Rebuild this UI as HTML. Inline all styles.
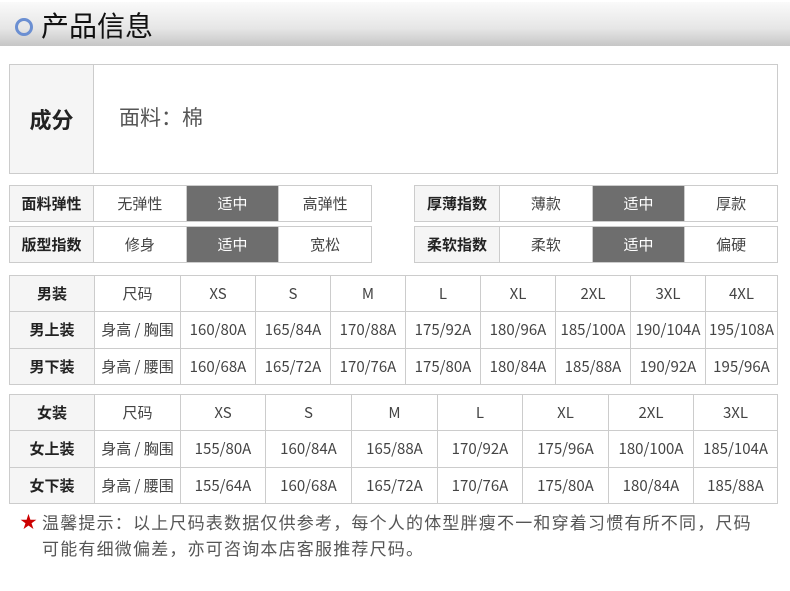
<!DOCTYPE html>
<html><head><meta charset="utf-8"><style>
*{margin:0;padding:0;box-sizing:border-box}
body{width:790px;height:591px;background:#fff;position:relative;overflow:hidden;font-family:"Noto Sans CJK SC","Liberation Sans",sans-serif;color:#333}
.hdr{position:absolute;left:0;top:2px;width:790px;height:44px;background:linear-gradient(#fafafa,#e6e6e6 60%,#c6c6c6)}
.ring{position:absolute;left:15px;top:16px;width:18px;height:18px;border:3px solid #6b8fd2;border-radius:50%}
.title{position:absolute;left:41px;top:4px;font-size:28px;color:#111;line-height:38px}
table{position:absolute;border-collapse:collapse;table-layout:fixed}
td{border:1px solid #ccc;text-align:center;font-size:15px;color:#444;padding:0;white-space:nowrap}
td.l{background:#f5f5f5;color:#222;font-weight:bold}
td.on{background:#6e6e6e;color:#fff}
.note{position:absolute;left:42px;top:509px;font-size:17px;letter-spacing:1.2px;color:#555;line-height:26px;width:740px}
.star{position:absolute;left:20px;top:509px;color:#c00;font-size:17px;line-height:24px}
</style></head><body>
<div class="hdr"><div class="ring"></div><div class="title">产品信息</div></div>

<table style="left:9px;top:64px;width:769px;height:110px">
<tr><td class="l" style="width:84px;font-size:22px">成分</td><td style="text-align:left;padding-left:25px;padding-bottom:4px;font-size:21px;color:#555">面料：棉</td></tr></table>

<table style="left:9px;top:185px;width:363px;height:37px"><tr><td class="l" style="width:84px">面料弹性</td><td>无弹性</td><td class="on">适中</td><td>高弹性</td></tr></table>
<table style="left:9px;top:226px;width:363px;height:37px"><tr><td class="l" style="width:84px">版型指数</td><td>修身</td><td class="on">适中</td><td>宽松</td></tr></table>
<table style="left:414px;top:185px;width:364px;height:37px"><tr><td class="l" style="width:85px">厚薄指数</td><td>薄款</td><td class="on">适中</td><td>厚款</td></tr></table>
<table style="left:414px;top:226px;width:364px;height:37px"><tr><td class="l" style="width:85px">柔软指数</td><td>柔软</td><td class="on">适中</td><td>偏硬</td></tr></table>

<table style="left:9px;top:275px;width:769px;height:110px">
<colgroup><col style="width:85px"><col style="width:86px"><col style="width:75px"><col style="width:75px"><col style="width:75px"><col style="width:75px"><col style="width:75px"><col style="width:75px"><col style="width:75px"><col></colgroup>
<tr><td class="l">男装</td><td>尺码</td><td>XS</td><td>S</td><td>M</td><td>L</td><td>XL</td><td>2XL</td><td>3XL</td><td>4XL</td></tr>
<tr><td class="l">男上装</td><td>身高 / 胸围</td><td>160/80A</td><td>165/84A</td><td>170/88A</td><td>175/92A</td><td>180/96A</td><td>185/100A</td><td>190/104A</td><td>195/108A</td></tr>
<tr><td class="l">男下装</td><td>身高 / 腰围</td><td>160/68A</td><td>165/72A</td><td>170/76A</td><td>175/80A</td><td>180/84A</td><td>185/88A</td><td>190/92A</td><td>195/96A</td></tr>
</table>

<table style="left:9px;top:394px;width:769px;height:110px">
<colgroup><col style="width:85px"><col style="width:86px"><col style="width:85px"><col style="width:86px"><col style="width:86px"><col style="width:85px"><col style="width:86px"><col style="width:85px"><col></colgroup>
<tr><td class="l">女装</td><td>尺码</td><td>XS</td><td>S</td><td>M</td><td>L</td><td>XL</td><td>2XL</td><td>3XL</td></tr>
<tr><td class="l">女上装</td><td>身高 / 胸围</td><td>155/80A</td><td>160/84A</td><td>165/88A</td><td>170/92A</td><td>175/96A</td><td>180/100A</td><td>185/104A</td></tr>
<tr><td class="l">女下装</td><td>身高 / 腰围</td><td>155/64A</td><td>160/68A</td><td>165/72A</td><td>170/76A</td><td>175/80A</td><td>180/84A</td><td>185/88A</td></tr>
</table>

<div class="star">★</div>
<div class="note">温馨提示：以上尺码表数据仅供参考，每个人的体型胖瘦不一和穿着习惯有所不同，尺码<br>可能有细微偏差，亦可咨询本店客服推荐尺码。</div>
</body></html>
